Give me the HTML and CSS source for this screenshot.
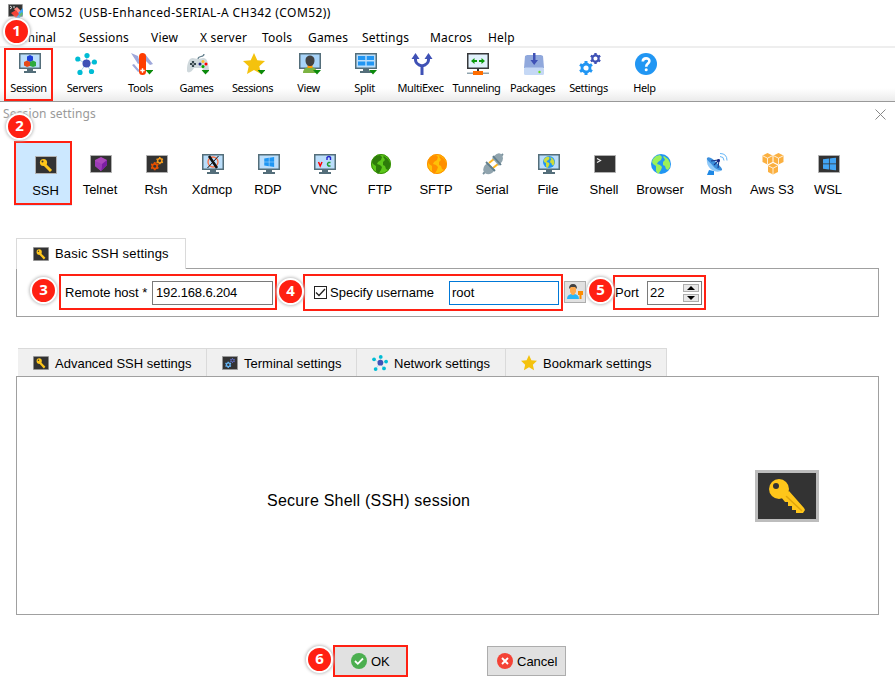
FILE: index.html
```html
<!DOCTYPE html>
<html lang="en">
<head>
<meta charset="utf-8">
<title>Session settings</title>
<link rel="stylesheet" href="styles.css">
</head>
<body>
<svg class="defs" width="0" height="0">
  <symbol id="monitor" viewBox="0 0 22 22">
    <path fill="#546e7a" d="M0 0h22v16H0zM8 16h6v2h3v2H5v-2h3z"/>
    <path fill="#bbdefb" d="M1.500 1.500h19v13h-19z"/>
  </symbol>
  <symbol id="key" viewBox="0 0 64 52">
    <path fill="#bdbdbd" d="M0 0h64v52H0z"/>
    <path fill="#333" d="M3 3h58v46H3z"/>
    <path fill="#ffc61a" d="m34 21 15 17 1 2-2 3h-7v-3h-4v-4h-4v-4h-3l-4-5z"/>
    <path stroke="#e0a50c" stroke-width="1.500" fill="none" d="m31 26 16 15"/>
    <circle cx="24" cy="19" r="10" fill="#ffc61a"/>
    <circle cx="21" cy="16" r="3" fill="#333"/>
  </symbol>
  <symbol id="keysmall" viewBox="0 0 22 18">
    <path fill="#b0b0b0" d="M0 0h22v18H0z"/>
    <path fill="#333" d="M1 1h20v16H1z"/>
    <path stroke="#ffc61a" stroke-width="3" fill="none" d="m9 8 7 7"/>
    <circle cx="8.500" cy="6.500" r="3.600" fill="#ffc61a"/>
    <circle cx="7.500" cy="5.500" r="1" fill="#333"/>
  </symbol>
  <symbol id="network" viewBox="0 0 22 22">
    <path stroke="#a9d5e8" stroke-width="1" d="M11 11 3 6m8 5 1-8m-1 8 9-2m-9 2 5 7m-5-7-6 8"/>
    <circle cx="11.500" cy="10.500" r="4" fill="#3f51b5"/>
    <g fill="#00bcd4"><circle cx="2.800" cy="6" r="2.600"/><circle cx="12" cy="2.600" r="2.600"/><circle cx="19.400" cy="9" r="2.600"/><circle cx="16.500" cy="18.500" r="2.600"/><circle cx="5" cy="19.400" r="2.600"/></g>
  </symbol>
  <symbol id="star" viewBox="0 0 22 22">
    <path fill="#f4c20d" d="m11 0 3.300 7.200 7.700.8-5.700 5.300L18 21l-7-4-7 4 1.700-7.700L0 8l7.700-.8z"/>
  </symbol>
  <symbol id="gear" viewBox="0 0 14 14">
    <circle cx="7" cy="7" r="4" fill="none" stroke="currentColor" stroke-width="2.800"/>
    <path stroke="currentColor" stroke-width="3" d="M7 0v3M7 11v3M1 3.500l2.300 1.400M10.700 9.100l2.300 1.400M1 10.500l2.300-1.400M10.700 4.900l2.300-1.400"/>
  </symbol>
  <symbol id="land" viewBox="0 0 20 20">
    <path fill="currentColor" d="M2 5 5 2l4-1 2 2-1 3-3 2-1 2 3 1 2 2-1 3-2 3-1 1-2-3V12L2 10 1 8zM13 2l4 3 2 4v4l-2 3-2-1-1-3-2-1v-3l2-2-1-2-1-1z"/>
  </symbol>
  <symbol id="arrow" viewBox="0 0 8 5"><path fill="#0b8a0b" d="M0 0h8L4 4.500z"/></symbol>
  <symbol id="window" viewBox="0 0 12 12"><path fill="currentColor" d="M0 1.700 5.500 1v4.600H0zM6.200.9 12 0v5.600H6.200zM0 6.300h5.500V11L0 10.300zM6.200 6.300H12V12l-5.800-.9z"/></symbol>
  <symbol id="cube" viewBox="0 0 11 12">
    <path fill="#fbb040" d="m5.500 0 5 2.400v6.700L5.500 11.500.5 9.100V2.400z"/>
    <path stroke="#fff" stroke-width=".8" fill="none" d="m.8 2.800 4.700 2.400 4.700-2.400M5.500 5.200v6"/>
  </symbol>
</svg>

<div class="app">
  <header class="titlebar">
    <svg width="16" height="16" viewBox="0 0 16 16"><path fill="#333" stroke="#999" stroke-width=".7" d="M.4.400h14v12H.4z"/><path d="m2 2 2 1.500L2 5" stroke="#ddd" fill="none"/><path d="M5 3h2" stroke="#ddd"/><path fill="#ff8a80" d="m6 5 3-2 4 4-3 3z"/><path fill="#42a5f5" d="m10 9 5-5v6l-5 6-3-4z"/><path fill="#66bb6a" d="m11 11 3-3 1 2-3 3z"/><path fill="#f44336" d="m3 9 5-3 3 4-3 4z"/></svg>
    <span class="caption">COM52&nbsp; (USB-Enhanced-SERIAL-A CH342 (COM52))</span>
  </header>
  <nav class="menu">
    <span class="m1">Terminal</span><span class="m2">Sessions</span><span class="m3">View</span><span class="m4">X server</span><span class="m5">Tools</span><span class="m6">Games</span><span class="m7">Settings</span><span class="m8">Macros</span><span class="m9">Help</span>
  </nav>
  <div class="toolbar">
    <div class="tool"><svg viewBox="0 0 22 22"><use href="#monitor"/><path fill="#1e40d8" d="m11 2 3 1.500v4L11 9 8 7.500v-4z"/><path fill="#e64a19" d="m8 7.500 3 1.500v4l-3 1-3-1.500V9z"/><path fill="#2eaa3e" d="m14 7.500 3 1.500v4l-3 1-3-1V9z"/></svg><span>Session</span></div>
    <div class="tool"><svg viewBox="0 0 22 22"><use href="#network"/></svg><span>Servers</span></div>
    <div class="tool"><svg viewBox="0 0 22 22"><path fill="#9fa8da" d="m0 0 7 3 2 7-2 1zM14 1l8 10-3 1-5-5zM1 12l2-1 6 7-2 1z"/><rect x="8" y="0" width="7" height="22" rx="3.500" fill="#ff3d00"/><path stroke="#fff" stroke-width="1.400" d="M9.300 17.500h4.400m-2.200-2.200v4.400"/><use href="#arrow" x="14.500" y="17" width="8" height="5"/></svg><span>Tools</span></div>
    <div class="tool"><svg viewBox="0 0 22 22"><path d="M11 6c0-4 6-1 6-5" fill="none" stroke="#607d8b" stroke-width="1.200"/><path fill="#cfd8dc" d="M3 6c3-2 5 0 8 0s5-2 8 0c2 2 3 9 3 12-1 4-5 1-7-3H7c-2 4-6 6-7 3C-.4 14 1 8 3 6z"/><path stroke="#37474f" stroke-width="2.200" d="M3 11h6M6 8v6"/><circle cx="6" cy="11" r=".8" fill="#fff"/><circle cx="16" cy="8.500" r="1.500" fill="#fbc02d"/><circle cx="13" cy="11" r="1.500" fill="#1a237e"/><circle cx="19" cy="11" r="1.500" fill="#f00"/><circle cx="16" cy="13.500" r="1.500" fill="#0a0"/><use href="#arrow" x="14.500" y="17" width="8" height="5"/></svg><span>Games</span></div>
    <div class="tool"><svg viewBox="0 0 22 22"><use href="#star"/><use href="#arrow" x="14.500" y="17" width="8" height="5"/></svg><span>Sessions</span></div>
    <div class="tool"><svg viewBox="0 0 22 22"><path fill="#546e7a" d="M0 0h22v16H0z"/><path fill="#a8d3f8" d="M1.500 1.500h19v13h-19z"/><path fill="#7cb342" d="M4 20c0-4 3-6 7-6s7 2 7 6z"/><path fill="#ff9800" d="M8.500 11h5v4h-5z"/><path fill="#424242" d="M6.500 7c0-6 9-6 9 0 0 4-2 6-4.500 6S6.500 11 6.500 7z"/><use href="#arrow" x="14" y="17" width="8" height="5"/></svg><span>View</span></div>
    <div class="tool"><svg viewBox="0 0 22 22"><use href="#monitor"/><path fill="#2196f3" d="M3 3h7.300v4H3zM11.700 3H19v4h-7.300zM3 8.500h7.300v4H3zM11.700 8.500H19v4h-7.300z"/><use href="#arrow" x="14" y="17" width="8" height="5"/></svg><span>Split</span></div>
    <div class="tool"><svg viewBox="0 0 22 22"><path fill="none" stroke="#3f51b5" stroke-width="3" d="M4.500 4v3c0 3 3 5 6.500 6 3.500-1 6.500-3 6.500-6V4M11 12v10"/><path fill="#3f51b5" d="m4.500 0 4 6h-8zM17.500 0l4 6h-8z"/></svg><span>MultiExec</span></div>
    <div class="tool"><svg viewBox="0 0 22 22"><path fill="#37383a" d="M0 0h22v16H0zM10 16h2v3h-2z"/><path fill="#e1f1fc" d="M1.500 1.500h19v13h-19z"/><path fill="#0b9a0b" d="m4 8 3.500-3v2H10v2H7.500v2zM18 8l-3.500-3v2H12v2h2.500v2z"/><path fill="#90a4ae" d="M0 19.500h22V21H0z"/><path fill="#ff6d00" d="M6 18h10v4H6z"/></svg><span>Tunneling</span></div>
    <div class="tool"><svg viewBox="0 0 22 22"><path fill="#90a8dc" d="M4 2h14l2 1 1 12H1L2 3z"/><rect x="1" y="14.500" width="20" height="7.500" rx="1.500" fill="#c5d8f5"/><circle cx="16.500" cy="19" r="1.200" fill="#64dd17"/><path fill="#3f51b5" d="M10 0h2.500v7H15l-3.800 5L7.500 7H10z"/></svg><span>Packages</span></div>
    <div class="tool"><svg viewBox="0 0 22 22"><use href="#gear" x="0" y="8" width="14" height="14" color="#2196f3"/><use href="#gear" x="11" y="0" width="11" height="11" color="#3f51b5"/></svg><span>Settings</span></div>
    <div class="tool"><svg viewBox="0 0 22 22"><circle cx="11" cy="11" r="11" fill="#2196f3"/><path fill="none" stroke="#fff" stroke-width="2.600" d="M7.800 8.500c0-4.200 6.600-4 6.600-.4 0 2.500-3.200 2.500-3.200 5.600"/><circle cx="11.200" cy="16.700" r="1.500" fill="#fff"/></svg><span>Help</span></div>
  </div>

  <section class="dialog">
    <div class="dialog-title"><span>Session settings</span><svg width="11" height="11" viewBox="0 0 11 11"><path d="m.5.500 10 10M10.500.500l-10 10" stroke="#888" stroke-width="1"/></svg></div>
    <div class="protocols">
      <div class="proto selected"><svg viewBox="0 0 22 22"><use href="#keysmall" y="2" width="22" height="18"/></svg><span>SSH</span></div>
      <div class="proto"><svg viewBox="0 0 22 22"><path fill="#333" stroke="#b0b0b0" d="M.5 2.500h21v17H.5z"/><path fill="#ab47bc" d="m11 4 6 3v5l-6 6-6-5V7z"/><path fill="#7b1fa2" d="m12 11 5-4v5l-6 6z"/><path fill="#9c3cb8" d="m5 8 7 3-1 7-6-5z"/></svg><span>Telnet</span></div>
      <div class="proto"><svg viewBox="0 0 22 22"><path fill="#333" stroke="#b0b0b0" d="M.5 2.500h21v17H.5z"/><use href="#gear" x="4.500" y="9" width="8.500" height="8.500" color="#e65100"/><use href="#gear" x="10" y="4" width="7.500" height="7.500" color="#f59a1b"/></svg><span>Rsh</span></div>
      <div class="proto"><svg viewBox="0 0 22 22"><use href="#monitor" y="1"/><circle cx="11" cy="9" r="5" fill="none" stroke="#ff7043" stroke-width="1.300"/><path stroke="#111" stroke-width="2.600" d="m7 3 8 12"/><path stroke="#111" stroke-width="1" d="M16.500 3 5.500 15"/></svg><span>Xdmcp</span></div>
      <div class="proto"><svg viewBox="0 0 22 22"><use href="#monitor" y="1"/><use href="#window" x="6" y="4" width="10.500" height="10" color="#1e96f3"/></svg><span>RDP</span></div>
      <div class="proto"><svg viewBox="0 0 22 22"><use href="#monitor" y="1"/><path fill="none" stroke="#f00" stroke-width="1.500" d="m4.500 9 1.700 4L8 9"/><path fill="none" stroke="#22c" stroke-width="1.400" d="M13 7V4.500q2-2 3.500 0V7"/><path fill="none" stroke="#1a9c2e" stroke-width="1.500" d="M16.500 9.500h-2q-2 1.500 0 3.500h2"/></svg><span>VNC</span></div>
      <div class="proto"><svg viewBox="0 0 22 22"><circle cx="11" cy="11" r="10" fill="#5cc81a"/><circle cx="11" cy="11" r="9.500" fill="none" stroke="#388e0a"/><use href="#land" x="1" y="1" width="20" height="20" color="#2e7d0a"/></svg><span>FTP</span></div>
      <div class="proto"><svg viewBox="0 0 22 22"><circle cx="11" cy="11" r="10" fill="#ffc107"/><circle cx="11" cy="11" r="9.500" fill="none" stroke="#ff8f00"/><use href="#land" x="1" y="1" width="20" height="20" color="#ff8f00"/></svg><span>SFTP</span></div>
      <div class="proto"><svg viewBox="0 0 22 22"><path stroke="#78909c" stroke-width="1.800" d="m1 21 4-4M18 4l3-3"/><path stroke="#fbb724" stroke-width="2" d="m7 10 5-4M11 15l5-4"/><path fill="#90a4ae" d="m3 12 3-2 7 7-3 3q-5 3-8-1-2-3 1-7zM12 3q4-4 7-2 4 4 0 9l-2 3-7-8z"/><path stroke="#607d8b" stroke-width="1.800" d="m4 9 9 9M11 3l8 9"/></svg><span>Serial</span></div>
      <div class="proto"><svg viewBox="0 0 22 22"><use href="#monitor" y="1"/><circle cx="11" cy="9" r="6" fill="#2196f3"/><use href="#land" x="5" y="3" width="12" height="12" color="#cddc39"/></svg><span>File</span></div>
      <div class="proto"><svg viewBox="0 0 22 22"><path fill="#333" stroke="#b0b0b0" d="M.5 2.500h21v17H.5z"/><path fill="none" stroke="#eee" stroke-width="1.200" d="m3 5.500 3.500 2L3 9.500"/></svg><span>Shell</span></div>
      <div class="proto"><svg viewBox="0 0 22 22"><circle cx="11" cy="11" r="10" fill="#2196f3"/><use href="#land" x="1" y="1" width="20" height="20" color="#9bf05a"/></svg><span>Browser</span></div>
      <div class="proto"><svg viewBox="0 0 22 22"><path fill="#1e88e5" d="m3 17 5 1v4H1z"/><path fill="#90caf9" d="M1 5c-1 6 2 11 7 13 3 1 6 1 8-1z"/><path fill="#3d8fdc" d="M1 5c2-2 6 1 9 4s7 7 6 8-6 0-9-4-7-6-6-8z"/><path stroke="#1a3a8a" stroke-width="1.100" fill="none" d="m5 8 8-1-1 8M13 7l-5 5"/><circle cx="12.500" cy="7.500" r="1.500" fill="#1a237e"/><path fill="none" stroke="#64b5f6" d="M14 3.500q4 0 4 4M14 .5q7 0 7 7"/></svg><span>Mosh</span></div>
      <div class="proto"><svg viewBox="0 0 22 22"><use href="#cube" x="0" y="0" width="11" height="12"/><use href="#cube" x="11" y="0" width="11" height="12"/><use href="#cube" x="5.500" y="10" width="11" height="12"/></svg><span>Aws S3</span></div>
      <div class="proto"><svg viewBox="0 0 22 22"><path fill="#333" stroke="#b0b0b0" d="M.5 2.500h21v17H.5z"/><use href="#window" x="5" y="4.500" width="13" height="13" color="#42a5f5"/></svg><span>WSL</span></div>
    </div>

    <div class="tabs basic-tabs"><div class="tab active"><svg width="16" height="14" viewBox="0 0 22 18" preserveAspectRatio="none"><use href="#keysmall"/></svg><span>Basic SSH settings</span></div></div>
    <div class="panel form">
      <label class="host-label">Remote host *</label>
      <div class="field host">192.168.6.204</div>
      <div class="check"><svg width="11" height="11" viewBox="0 0 11 11"><path d="m1 5.500 3 3L10 2" fill="none" stroke="#222" stroke-width="1.300"/></svg></div>
      <label class="user-label">Specify username</label>
      <div class="field user">root</div>
      <div class="userbtn"><svg width="18" height="18" viewBox="0 0 18 18"><path fill="#29b6f6" d="M1 16q0-5 6-5t6 5z"/><path fill="#ffa94d" d="M4 4h6v5l-2 3H6L4 9z"/><path fill="#424242" d="M3 6q0-5 4-5t4 5l-2-2H5z"/><path fill="#fb8c00" d="M12 8h5v4h-1.500v4h-2v-4H12z"/></svg></div>
      <label class="port-label">Port</label>
      <div class="field port"><span>22</span><div class="spin"><i><svg width="8" height="4" viewBox="0 0 8 4"><path d="m0 4 4-4 4 4z"/></svg></i><i><svg width="8" height="4" viewBox="0 0 8 4"><path d="m0 0 4 4 4-4z"/></svg></i></div></div>
    </div>

    <div class="tabs more-tabs">
      <div class="tab t1"><svg width="16" height="14" viewBox="0 0 22 18" preserveAspectRatio="none"><use href="#keysmall"/></svg><span>Advanced SSH settings</span></div>
      <div class="tab t2"><svg width="16" height="14" viewBox="0 0 16 14"><path fill="#333" stroke="#999" d="M.5.500h15v13H.5z"/><use href="#gear" x="3" y="5.500" width="6.500" height="6.500" color="#64b5f6"/><use href="#gear" x="8" y="2" width="5" height="5" color="#5c6bc0"/></svg><span>Terminal settings</span></div>
      <div class="tab t3"><svg width="16" height="16"><use href="#network"/></svg><span>Network settings</span></div>
      <div class="tab t4"><svg width="16" height="16"><use href="#star"/></svg><span>Bookmark settings</span></div>
    </div>
    <div class="panel summary">
      <span>Secure Shell (SSH) session</span>
      <svg width="64" height="52"><use href="#key"/></svg>
    </div>
    <footer class="buttons">
      <div class="button ok"><svg width="16" height="16" viewBox="0 0 16 16"><circle cx="8" cy="8" r="8" fill="#4caf50"/><path d="m4 8 2.800 2.800L12 5.500" fill="none" stroke="#fff" stroke-width="1.800"/></svg><span>OK</span></div>
      <div class="button cancel"><svg width="16" height="16" viewBox="0 0 16 16"><circle cx="8" cy="8" r="8" fill="#f44336"/><path d="m5 5 6 6m0-6-6 6" stroke="#fff" stroke-width="1.900"/></svg><span>Cancel</span></div>
    </footer>
  </section>

  <div class="frame f1"></div><div class="frame f2"></div><div class="frame f3"></div><div class="frame f4"></div><div class="frame f5"></div><div class="frame f6"></div>
  <b class="badge b1">1</b><b class="badge b2">2</b><b class="badge b3">3</b><b class="badge b4">4</b><b class="badge b5">5</b><b class="badge b6">6</b>
</div>
</body>
</html>
```
FILE: styles.css
```css
* { box-sizing: border-box; }
body { margin: 0; background: #fff; color: #000; font: 13px/16px "Liberation Sans", sans-serif; overflow: hidden; }
svg { display: block; flex: none; }
.defs { position: absolute; }
.app { position: relative; width: 895px; height: 683px; white-space: nowrap; }
.titlebar { display: flex; height: 27px; padding: 4px 0 0 8px; gap: 5px; font: 12px/17px "Noto Sans", sans-serif; }
.caption { letter-spacing: .42px; }
.menu { display: flex; height: 21px; border-bottom: 2px solid #eee; font: 12px/21px "Noto Sans", sans-serif; }
.menu span { flex: none; letter-spacing: .2px; }
.menu .m1 { width: 73px; margin-left: 6px; letter-spacing: .1px; }
.m2 { width: 72px; }
.m3 { width: 49px; }
.m4 { width: 62px; }
.m5 { width: 46px; }
.m6 { width: 54px; }
.m7 { width: 68px; }
.m8 { width: 58px; }
.toolbar { display: flex; height: 54px; padding-left: 2px; border-bottom: 1px solid #999; background: linear-gradient(#fff 76%, #ebebeb); }
.tool { width: 56px; padding-top: 5px; display: flex; flex-direction: column; align-items: center; font: 11px/14px "Noto Sans", sans-serif; letter-spacing: -.4px; }
.tool svg { width: 22px; height: 22px; }
.tool span { margin: 6px 0 0 -3px; }
.dialog { background: #fff; }
.dialog-title { display: flex; justify-content: space-between; height: 39px; padding: 3px 9px 0 3px; color: #999; font: 12px/18px "Noto Sans", sans-serif; letter-spacing: .15px; }
.dialog-title svg { margin-top: 4px; }
.protocols { display: flex; height: 65px; padding-left: 14px; }
.proto { width: 56px; padding-top: 12px; display: flex; flex-direction: column; align-items: center; }
.proto svg { width: 22px; height: 22px; margin-left: 4px; }
.proto span { margin: 7px 0 0 2px; }
.proto.selected { width: 58px; margin-right: 1px; background: #cce8ff; }
.proto.selected + .proto { margin-left: -2px; }
.proto.selected span { margin-left: 5px; margin-top: 8px; }
.proto.selected svg { margin-top: 1px; margin-bottom: -1px; margin-left: 6px; }
.tabs { display: flex; }
.tab { display: flex; align-items: center; height: 29px; gap: 6px; padding-left: 16px; background: #f0f0f0; border-top: 1px solid #dadada; border-right: 1px solid #dadada; }
.basic-tabs { margin: 32px 0 0 16px; height: 30px; position: relative; }
.tab.active { width: 170px; height: 31px; background: #fff; border-left: 1px solid #dadada; letter-spacing: .18px; }
.panel { width: 863px; margin-left: 16px; border: 1px solid #a0a0a0; }
.form { height: 49px; display: flex; align-items: flex-start; padding-top: 12px; }
.form label { padding-top: 4px; }
.field { height: 24px; border: 1px solid #7a7a7a; padding: 3px 0 0 3px; }
.host-label { width: 87px; margin-left: 48px; }
.host { width: 121px; letter-spacing: -.15px; }
.check { width: 13px; height: 13px; margin: 5px 3px 0 41px; border: 1px solid #222; }
.user-label { width: 119px; }
.user { width: 110px; border-color: #0078d7; padding-left: 2px; }
.userbtn { width: 22px; height: 22px; margin-left: 5px; padding: 1px; background: #e1e1e1; border: 1px solid #adadad; }
.port-label { width: 32px; margin-left: 29px; }
.port { width: 55px; display: flex; justify-content: space-between; padding: 3px 2px 0 2px; }
.spin { margin-top: -1px; display: flex; flex-direction: column; gap: 2px; }
.spin i { width: 16px; height: 8px; display: flex; align-items: center; justify-content: center; background: #e8e8e8; border: 1px solid #adadad; }
.more-tabs { margin: 31px 0 0 18px; height: 28px; overflow: hidden; }
.more-tabs span { padding-top: 2px; }
.t1 { width: 189px; padding-left: 15px; }
.t2 { width: 150px; padding-left: 15px; }
.t3 { width: 149px; padding-left: 15px; }
.t4 { width: 161px; padding-left: 15px; letter-spacing: .1px; }
.summary { height: 239px; display: flex; align-items: center; justify-content: space-between; padding: 0 59px 0 250px; font-size: 16px; letter-spacing: .22px; }
.summary span { padding-top: 10px; }
.buttons { display: flex; padding: 31px 0 0 334px; gap: 80px; }
.button { height: 30px; display: flex; align-items: center; gap: 4px; background: #e1e1e1; border: 1px solid #adadad; }
.button span { padding-top: 1px; }
.ok { width: 73px; padding-left: 16px; }
.cancel { width: 79px; padding-left: 9px; }
.frame { position: absolute; border: 2px solid #ff2012; }
.f1 { left: 4px; top: 48px; width: 49px; height: 53px; }
.f2 { left: 14px; top: 141px; width: 58px; height: 64px; }
.f3 { left: 59px; top: 274px; width: 218px; height: 36px; }
.f4 { left: 303px; top: 274px; width: 260px; height: 37px; }
.f5 { left: 613px; top: 275px; width: 93px; height: 35px; }
.f6 { left: 333px; top: 645px; width: 75px; height: 32px; }
.badge { position: absolute; width: 27px; height: 27px; border: 2px solid #fff; border-radius: 50%; background: #ff2012; box-shadow: 0 0 3px 1px #c4c4c4; color: #fff; text-align: center; font: bold 15px/21px "Open Sans", sans-serif; }
.b1 { left: 3px; top: 18px; }
.b2 { left: 6px; top: 113px; }
.b3 { left: 30px; top: 277px; }
.b4 { left: 277px; top: 278px; }
.b5 { left: 587px; top: 277px; }
.b6 { left: 306px; top: 646px; }
```
